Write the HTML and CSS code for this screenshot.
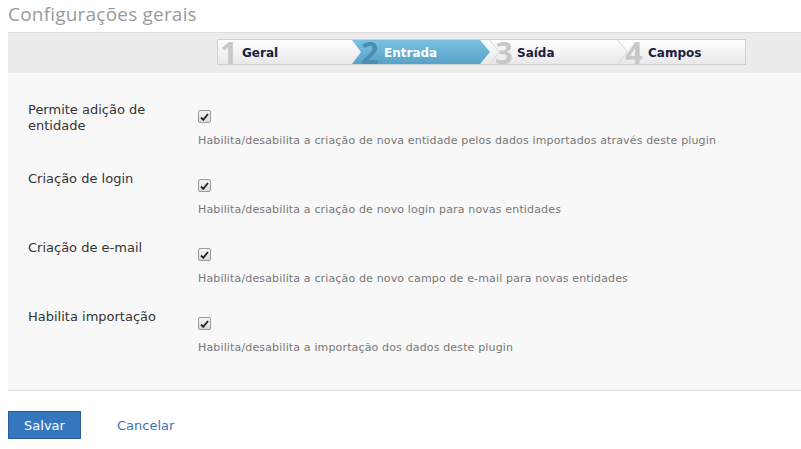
FILE: index.html
```html
<!DOCTYPE html>
<html lang="pt">
<head>
<meta charset="utf-8">
<link rel="stylesheet" href="styles.css">
</head>
<body>
<h1 class="title">Configurações gerais</h1>
<div class="wizard-band">
  <ol class="wizard">
    <li class="step step-1"><span class="num">1</span><span class="name">Geral</span></li>
    <li class="step step-2 active"><span class="num">2</span><span class="name">Entrada</span></li>
    <li class="step step-3"><svg class="sep" width="12" height="24" viewBox="0 0 12 24"><path d="M0.5 0 L10.5 12 L0.5 24" fill="none" stroke="#d6d6d6" stroke-width="1"/></svg><span class="num">3</span><span class="name">Saída</span></li>
    <li class="step step-4"><svg class="sep" width="12" height="24" viewBox="0 0 12 24"><path d="M0.5 0 L10.5 12 L0.5 24" fill="none" stroke="#d6d6d6" stroke-width="1"/></svg><span class="num">4</span><span class="name">Campos</span></li>
  </ol>
</div>
<div class="form">
  <div class="row">
    <div class="label">Permite adição de entidade</div>
    <div class="field">
      <span class="check"><svg width="9" height="8" viewBox="0 0 9 8"><path d="M1 4.5 L3.3 6.8 L8 1" fill="none" stroke="#222" stroke-width="1.8"/></svg></span>
      <div class="desc">Habilita/desabilita a criação de nova entidade pelos dados importados através deste plugin</div>
    </div>
  </div>
  <div class="row">
    <div class="label">Criação de login</div>
    <div class="field">
      <span class="check"><svg width="9" height="8" viewBox="0 0 9 8"><path d="M1 4.5 L3.3 6.8 L8 1" fill="none" stroke="#222" stroke-width="1.8"/></svg></span>
      <div class="desc">Habilita/desabilita a criação de novo login para novas entidades</div>
    </div>
  </div>
  <div class="row">
    <div class="label">Criação de e-mail</div>
    <div class="field">
      <span class="check"><svg width="9" height="8" viewBox="0 0 9 8"><path d="M1 4.5 L3.3 6.8 L8 1" fill="none" stroke="#222" stroke-width="1.8"/></svg></span>
      <div class="desc">Habilita/desabilita a criação de novo campo de e-mail para novas entidades</div>
    </div>
  </div>
  <div class="row">
    <div class="label">Habilita importação</div>
    <div class="field">
      <span class="check"><svg width="9" height="8" viewBox="0 0 9 8"><path d="M1 4.5 L3.3 6.8 L8 1" fill="none" stroke="#222" stroke-width="1.8"/></svg></span>
      <div class="desc">Habilita/desabilita a importação dos dados deste plugin</div>
    </div>
  </div>
</div>
<div class="actions">
  <button class="btn-primary" type="button">Salvar</button>
  <a class="link" href="#">Cancelar</a>
</div>
</body>
</html>
```
FILE: styles.css
```css
html, body { margin: 0; padding: 0; background: #fff; }
body {
  padding: 0 0 0 8px;
  font-family: "DejaVu Sans", Verdana, sans-serif;
  color: #333;
  overflow: hidden;
}
.title {
  margin: 0;
  padding-top: 1px;
  height: 32px;
  box-sizing: border-box;
  font-family: "Open Sans", "Segoe UI", sans-serif;
  font-weight: 400;
  font-size: 19px;
  letter-spacing: 0.2px;
  line-height: 26px;
  color: #9a9a9a;
}
.wizard-band {
  background: #ececec;
  border-top: 1px solid #dcdcdc;
  height: 41px;
  padding: 6px 0 0 209px;
  box-sizing: border-box;
}
.wizard {
  list-style: none;
  margin: 0;
  padding: 0;
  display: flex;
  width: 527px;
  height: 24px;
  border: 1px solid #cfcfcf;
  background: linear-gradient(#ffffff, #e8e8e8);
}
.step {
  position: relative;
  height: 24px;
  box-sizing: border-box;
  display: flex;
  align-items: flex-start;
  font-size: 12px;
  font-weight: bold;
  color: #1c1c40;
}
.step .num {
  display: block;
  height: 24px;
  font-family: "Open Sans", "DejaVu Sans", sans-serif;
  font-size: 31px;
  font-weight: 700;
  line-height: 25px;
  color: #c8c8c8;
  flex: none;
}
.step .name { line-height: 24px; padding-top: 1px; }
.step-1 { width: 134px; padding-left: 2px; }
.step-1 .num { width: 22px; }
.step-2 {
  width: 138px;
  padding-left: 9px;
  background: linear-gradient(#7ac1e3, #57a1c8);
  clip-path: polygon(0 0, calc(100% - 10px) 0, 100% 50%, calc(100% - 10px) 100%, 0 100%, 9px 50%);
  color: #fff;
}
.step-2 .num { color: #4c8db3; width: 23px; }
.step-3 { width: 137px; padding-left: 15px; margin-left: -10px; }
.step-3 .num { width: 22px; }
.step-3 .sep { left: 9px; }
.step-4 { width: 128px; padding-left: 8px; }
.step-4 .num { width: 23px; }
.sep { position: absolute; left: 0; top: 0; }

.form {
  background: #f8f8f8;
  border-bottom: 1px solid #dedede;
  padding: 29px 0 12px 20px;
}
.row {
  display: grid;
  grid-template-columns: 170px 1fr;
  margin-bottom: 23px;
}
.label {
  font-size: 13px;
  line-height: 16px;
  color: #333;
  padding-right: 20px;
}
.field { padding-top: 8px; }
.check {
  display: flex;
  align-items: center;
  justify-content: center;
  width: 11px;
  height: 11px;
  border: 1px solid #9a9a9a;
  border-radius: 2px;
  background: linear-gradient(#f4f4f4, #dadada);
}
.desc {
  margin-top: 11px;
  font-size: 11px;
  letter-spacing: 0.15px;
  line-height: 14px;
  color: #777;
}
.actions {
  display: flex;
  align-items: center;
  padding-top: 20px;
}
.btn-primary {
  width: 73px;
  height: 28px;
  background: #3577bf;
  border: 1px solid #2a5f9c;
  color: #fff;
  font-family: "DejaVu Sans", Verdana, sans-serif;
  font-size: 13px;
  padding: 0;
  margin: 0;
}
.link {
  margin-left: 36px;
  font-size: 13px;
  color: #3f72b5;
  text-decoration: none;
}
```
